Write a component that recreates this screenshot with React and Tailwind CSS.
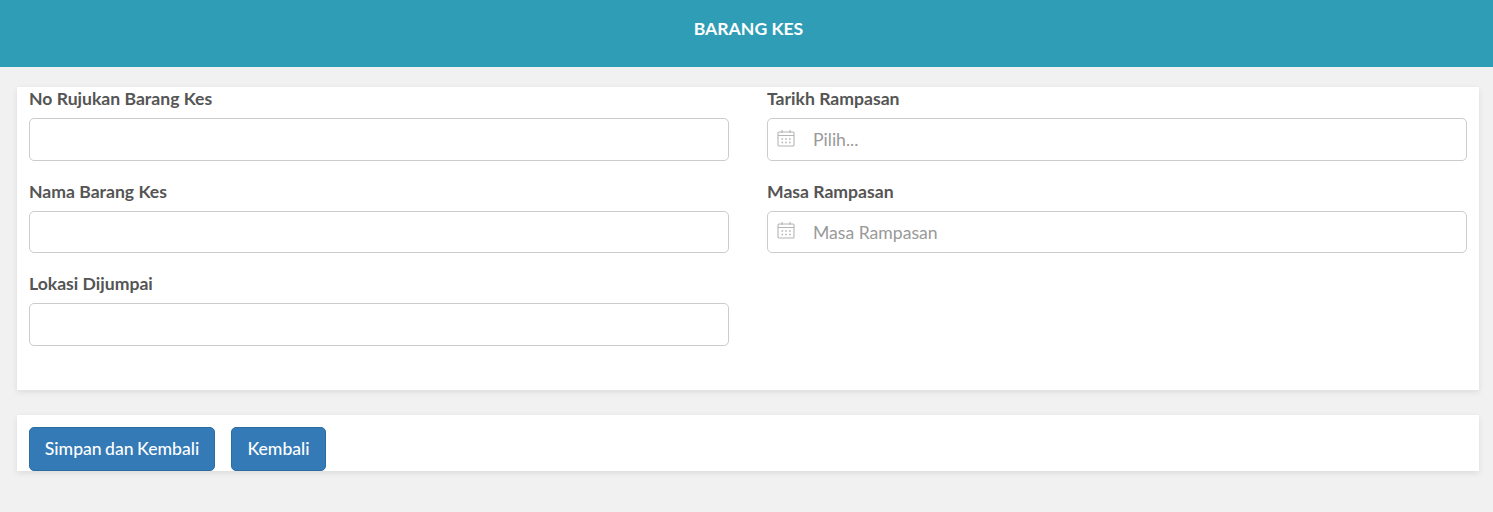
const font = { fontFamily: 'Lato, sans-serif' };
function Cal() {
  return (
    <svg width="18" height="18" viewBox="0 0 18 18" fill="none" stroke="#b4b4b4" strokeWidth="1.1" className="absolute left-[9.5px] top-[10.5px]">
      <rect x="1" y="3" width="16" height="14" rx="1" />
      <path d="M1 6.5h16M5 1v3M13 1v3" />
      <path d="M4.5 10h1.6M8.2 10h1.6M12 10h1.6M4.5 13.5h1.6M8.2 13.5h1.6M12 13.5h1.6" strokeWidth="1.5" />
    </svg>
  );
}
function Field({ label, placeholder, icon }) {
  return (
    <div className="flex flex-col">
      <label className="text-[17.6px] leading-[24px] font-bold text-[#555] h-[31px]">{label}</label>
      <div className="relative">
        {icon && <Cal />}
        <input placeholder={placeholder} className={"block w-full h-[42.5px] pt-[1px] rounded-[5px] border border-[#ccc] bg-white text-[17.6px] text-[#555] placeholder:text-[#999] outline-none " + (icon ? "pl-[45px]" : "px-3")} />
      </div>
    </div>
  );
}
export default function App() {
  return (
    <div style={font} className="min-h-[512px] bg-[#f1f1f1]">
      <div className="h-[67px] bg-[#2f9db6] flex items-center justify-center text-white font-bold text-[17.6px] pb-[8px] pl-[4px]">BARANG KES</div>
      <div className="ml-[17px] mr-[14px] mt-[20px] bg-white shadow-[0_2px_6px_rgba(0,0,0,0.09)] h-[303px] px-3">
        <div className="grid grid-cols-2 gap-x-[38px]">
          <div className="flex flex-col gap-[19px]">
            <Field label="No Rujukan Barang Kes" />
            <Field label="Nama Barang Kes" />
            <Field label="Lokasi Dijumpai" />
          </div>
          <div className="flex flex-col gap-[19px]">
            <Field label="Tarikh Rampasan" placeholder="Pilih..." icon />
            <Field label="Masa Rampasan" placeholder="Masa Rampasan" icon />
          </div>
        </div>
      </div>
      <div className="ml-[17px] mr-[14px] mt-[25px] bg-white shadow-[0_2px_6px_rgba(0,0,0,0.09)] h-[56px] px-3 pt-3 flex gap-4 items-start">
        <button className="h-[44px] w-[186px] rounded-[5px] bg-[#337ab7] border border-[#2e6da4] text-white text-[17.6px] font-medium [word-spacing:-1px]">Simpan dan Kembali</button>
        <button className="h-[44px] w-[95px] rounded-[5px] bg-[#337ab7] border border-[#2e6da4] text-white text-[17.6px] font-medium">Kembali</button>
      </div>
    </div>
  );
}
